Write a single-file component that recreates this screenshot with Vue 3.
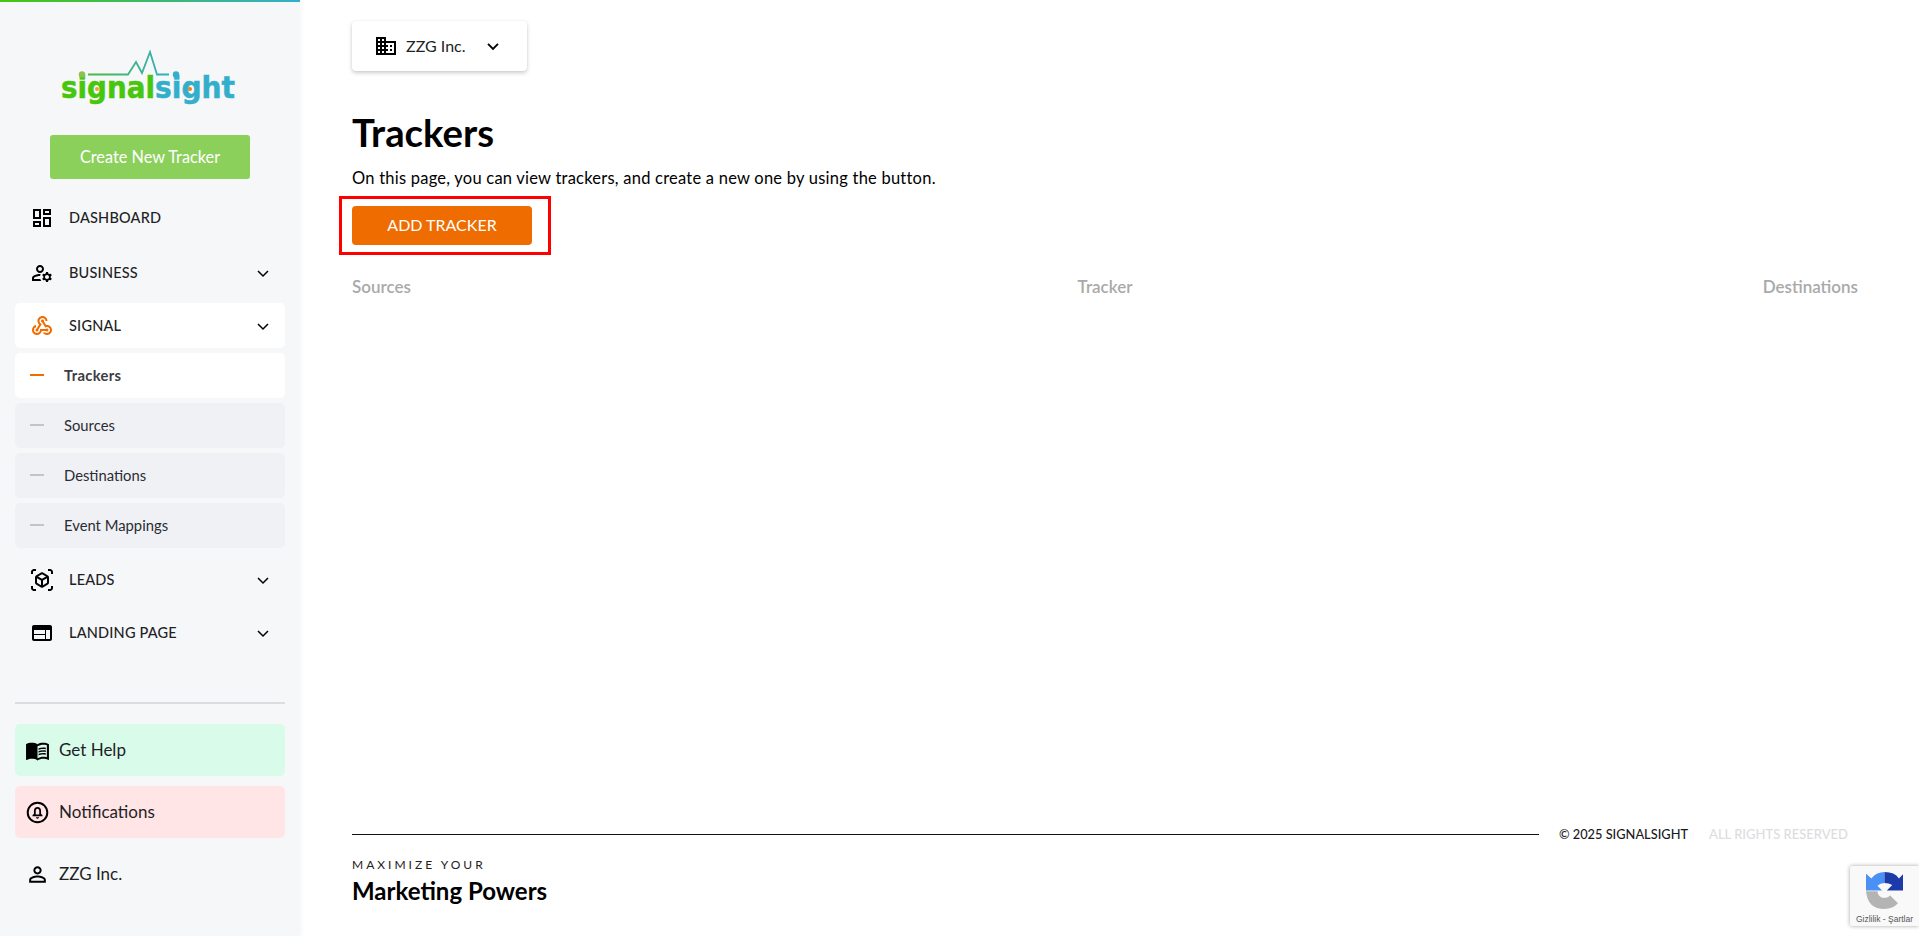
<script setup>
const chevron = 'M6 9.5l6 6 6-6'
const topItems = [
  { label: 'DASHBOARD', d: 'M19 5v2h-4V5h4M9 5v6H5V5h4m10 8v6h-4v-6h4M9 17v2H5v-2h4M21 3h-8v6h8V3zM11 3H3v10h8V3zm10 8h-8v10h8V11zm-10 4H3v6h8v-6z', arrow: false },
  { label: 'BUSINESS', d: 'M4 18v-.65c0-.34.16-.66.41-.81C6.1 15.53 8.03 15 10 15c.03 0 .05 0 .08.01.1-.7.3-1.37.59-1.98-.22-.02-.44-.03-.67-.03-2.42 0-4.68.67-6.61 1.82-.88.52-1.39 1.5-1.39 2.53V20h9.26c-.42-.6-.75-1.28-.97-2H4zM10 12c2.21 0 4-1.79 4-4s-1.79-4-4-4-4 1.79-4 4 1.79 4 4 4zm0-6c1.1 0 2 .9 2 2s-.9 2-2 2-2-.9-2-2 .9-2 2-2zM20.75 16c0-.22-.03-.42-.06-.63l1.14-1.01-1-1.73-1.45.49c-.32-.27-.68-.48-1.08-.63L18 11h-2l-.3 1.49c-.4.15-.76.36-1.08.63l-1.45-.49-1 1.73 1.14 1.01c-.03.21-.06.41-.06.63s.03.42.06.63l-1.14 1.01 1 1.73 1.45-.49c.32.27.68.48 1.08.63L16 21h2l.3-1.49c.4-.15.76-.36 1.08-.63l1.45.49 1-1.73-1.14-1.01c.03-.21.06-.41.06-.63zM17 18c-1.1 0-2-.9-2-2s.9-2 2-2 2 .9 2 2-.9 2-2 2z', arrow: true }
]
const webhook = 'M10 15h5.88c.27-.31.67-.5 1.12-.5.83 0 1.5.67 1.5 1.5s-.67 1.5-1.5 1.5c-.44 0-.84-.19-1.12-.5H11.9c-.46 2.28-2.48 4-4.9 4-2.76 0-5-2.24-5-5 0-2.42 1.72-4.44 4-4.9v2.07c-1.16.41-2 1.53-2 2.83 0 1.65 1.35 3 3 3s3-1.35 3-3v-1zm2.5-11c1.65 0 3 1.35 3 3h2c0-2.76-2.24-5-5-5s-5 2.24-5 5c0 1.43.6 2.71 1.55 3.62l-2.35 3.9c-.68.14-1.2.75-1.2 1.48 0 .83.67 1.5 1.5 1.5s1.5-.67 1.5-1.5c0-.16-.02-.31-.07-.45l3.38-5.63C10.49 9.61 9.5 8.42 9.5 7c0-1.65 1.35-3 3-3zm4.5 9c-.64 0-1.23.2-1.72.54l-3.05-5.07C11.53 8.35 11 7.74 11 7c0-.83.67-1.5 1.5-1.5S14 6.17 14 7c0 .15-.02.29-.06.43l2.19 3.65c.28-.05.57-.08.87-.08 2.76 0 5 2.24 5 5s-2.24 5-5 5c-1.85 0-3.47-1.01-4.33-2.5h2.67c.48.32 1.05.5 1.66.5 1.65 0 3-1.35 3-3s-1.35-3-3-3z'
const subItems = [
  { label: 'Trackers', active: true },
  { label: 'Sources', active: false },
  { label: 'Destinations', active: false },
  { label: 'Event Mappings', active: false }
]
const lowerItems = [
  { label: 'LEADS', d: 'M3 4c0-.55.45-1 1-1h2V1H4C2.34 1 1 2.34 1 4v2h2V4zm0 16v-2H1v2c0 1.66 1.34 3 3 3h2v-2H4c-.55 0-1-.45-1-1zM20 1h-2v2h2c.55 0 1 .45 1 1v2h2V4c0-1.66-1.34-3-3-3zm1 19c0 .55-.45 1-1 1h-2v2h2c1.66 0 3-1.34 3-3v-2h-2v2zM19 14.87V9.13c0-.72-.38-1.38-1-1.73l-5-2.88c-.31-.18-.65-.27-1-.27s-.69.09-1 .27L6 7.39c-.62.36-1 1.02-1 1.74v5.74c0 .72.38 1.38 1 1.73l5 2.88c.31.18.65.27 1 .27s.69-.09 1-.27l5-2.88c.62-.35 1-1.01 1-1.73zm-8 2.3l-4-2.3v-4.63l4 2.33v4.6zm1-6.33L8.01 8.53 12 6.23l3.99 2.3L12 10.84zm5 4.03l-4 2.3v-4.6l4-2.33v4.63z' },
  { label: 'LANDING PAGE', d: 'M20 4H4c-1.1 0-1.99.9-1.99 2L2 18c0 1.1.9 2 2 2h16c1.1 0 2-.9 2-2V6c0-1.1-.9-2-2-2zm-5 14H4v-4h11v4zm0-5H4V9h11v4zm5 5h-4V9h4v9z' }
]
const columns = ['Sources', 'Tracker', 'Destinations']
const bookPaths = [
  'M21 5c-1.11-.35-2.33-.5-3.5-.5-1.95 0-4.05.4-5.5 1.5-1.45-1.1-3.55-1.5-5.5-1.5S2.45 4.9 1 6v14.65c0 .25.25.5.5.5.1 0 .15-.05.25-.05C3.1 20.45 5.05 20 6.5 20c1.95 0 4.05.4 5.5 1.5 1.35-.85 3.8-1.5 5.5-1.5 1.65 0 3.35.3 4.75 1.05.1.05.15.05.25.05.25 0 .5-.25.5-.5V6c-.6-.45-1.25-.75-2-1zm0 13.5c-1.1-.35-2.3-.5-3.5-.5-1.7 0-4.15.65-5.5 1.5V8c1.35-.85 3.8-1.5 5.5-1.5 1.2 0 2.4.15 3.5.5v11.5z',
  'M17.5 10.5c.88 0 1.73.09 2.5.26V9.24c-.79-.15-1.64-.24-2.5-.24-1.7 0-3.24.29-4.5.83v1.66c1.13-.64 2.7-.99 4.5-.99zM13 12.49v1.66c1.13-.64 2.7-.99 4.5-.99.88 0 1.73.09 2.5.26V11.9c-.79-.15-1.64-.24-2.5-.24-1.7 0-3.24.3-4.5.83zM17.5 14.33c-1.7 0-3.24.29-4.5.83v1.66c1.13-.64 2.7-.99 4.5-.99.88 0 1.73.09 2.5.26v-1.52c-.79-.16-1.64-.24-2.5-.24z'
]
const person = 'M12 5.9c1.16 0 2.1.94 2.1 2.1s-.94 2.1-2.1 2.1S9.9 9.16 9.9 8s.94-2.1 2.1-2.1m0 9c2.97 0 6.1 1.46 6.1 2.1v1.1H5.9V17c0-.64 3.13-2.1 6.1-2.1M12 4C9.79 4 8 5.79 8 8s1.79 4 4 4 4-1.79 4-4-1.79-4-4-4zm0 9c-2.67 0-8 1.34-8 4v3h16v-3c0-2.66-5.33-4-8-4z'
const domain = 'M12 7V3H2v18h20V7H12zM6 19H4v-2h2v2zm0-4H4v-2h2v2zm0-4H4V9h2v2zm0-4H4V5h2v2zm4 12H8v-2h2v2zm0-4H8v-2h2v2zm0-4H8V9h2v2zm0-4H8V5h2v2zm10 12h-8v-2h2v-2h-2v-2h2v-2h-2V9h8v10zm-2-8h-2v2h2v-2zm0 4h-2v2h2v-2z'
</script>

<template>
  <div class="page">
    <aside class="sidebar">
      <div class="logo-wrap">
        <svg class="logo" width="210" height="80" viewBox="0 0 210 80">
          <defs>
            <linearGradient id="pulse" x1="0" x2="1" y1="0" y2="0">
              <stop offset="0" stop-color="#4cbb3c" />
              <stop offset="1" stop-color="#33aec4" />
            </linearGradient>
          </defs>
          <polyline points="48,34.500 88,34.500 96,22 102,33 110,12 117,34.500 129,34.500" fill="none" stroke="url(#pulse)" stroke-width="1.8" />
          <text x="21" y="58" class="logo-text" fill="#46c60c" stroke="#46c60c" textLength="94" lengthAdjust="spacingAndGlyphs">signal</text>
          <text x="115" y="58" class="logo-text" fill="#33aecb" stroke="#33aecb" textLength="80" lengthAdjust="spacingAndGlyphs">sight</text>
          <circle cx="42" cy="34.500" r="3.200" fill="#8cc152" />
          <circle cx="136" cy="34.500" r="3.200" fill="#33aecb" />
          <circle cx="57" cy="49" r="2" fill="#f79a3e" />
          <circle cx="150" cy="49" r="2" fill="#f77f0c" />
        </svg>
      </div>
      <button class="create">Create New Tracker</button>

      <nav class="menu">
        <a v-for="it in topItems" :key="it.label" class="item">
          <svg class="icon" viewBox="0 0 24 24"><path :d="it.d" /></svg>
          <span class="label">{{ it.label }}</span>
          <svg v-if="it.arrow" class="chev" viewBox="0 0 24 24"><path :d="chevron" /></svg>
        </a>
        <a class="item open">
          <svg class="icon orange" viewBox="0 0 24 24"><path :d="webhook" /></svg>
          <span class="label">SIGNAL</span>
          <svg class="chev" viewBox="0 0 24 24"><path :d="chevron" /></svg>
        </a>
        <div class="subs">
          <a v-for="s in subItems" :key="s.label" class="sub" :class="{ active: s.active }">
            <i class="dash"></i>
            <span>{{ s.label }}</span>
          </a>
        </div>
        <a v-for="it in lowerItems" :key="it.label" class="item lower">
          <svg class="icon" viewBox="0 0 24 24"><path :d="it.d" /></svg>
          <span class="label">{{ it.label }}</span>
          <svg class="chev" viewBox="0 0 24 24"><path :d="chevron" /></svg>
        </a>
      </nav>

      <div class="side-bottom">
        <hr class="rule" />
        <a class="tile help">
          <svg class="tile-icon" viewBox="0 0 24 24"><path v-for="p in bookPaths" :key="p" :d="p" /></svg>
          <span>Get Help</span>
        </a>
        <a class="tile notif">
          <svg class="tile-icon" viewBox="0 0 24 24">
            <circle cx="12" cy="12" r="9.400" fill="none" stroke="#000" stroke-width="1.900" />
            <path d="M12 6.800c-2.100 0-3.400 1.600-3.400 3.700v2.600L7.200 14.700v.8h9.600v-.8l-1.400-1.600v-2.600c0-2.100-1.300-3.700-3.400-3.700zm0 1.700c1.100 0 1.700 1 1.700 2.100v3.200H10.300V10.600c0-1.100.6-2.100 1.700-2.100zM10.500 16.500h3c0 .9-.7 1.400-1.500 1.400s-1.500-.5-1.500-1.400z" fill-rule="evenodd" />
          </svg>
          <span>Notifications</span>
        </a>
        <a class="tile plain">
          <svg class="tile-icon" viewBox="0 0 24 24"><path :d="person" /></svg>
          <span>ZZG Inc.</span>
        </a>
      </div>
    </aside>

    <main class="main">
      <div class="company">
        <svg class="company-icon" viewBox="0 0 24 24"><path :d="domain" /></svg>
        <span class="company-name">ZZG Inc.</span>
        <svg class="company-chev" viewBox="0 0 24 24"><path :d="chevron" /></svg>
      </div>

      <h1>Trackers</h1>
      <p class="intro">On this page, you can view trackers, and create a new one by using the button.</p>
      <div class="highlight">
        <button class="add">ADD TRACKER</button>
      </div>

      <div class="columns">
        <span v-for="c in columns" :key="c">{{ c }}</span>
      </div>

      <footer class="foot">
        <div class="foot-line">
          <i class="line"></i>
          <span class="copy">© 2025 SIGNALSIGHT</span>
          <span class="rights">ALL RIGHTS RESERVED</span>
        </div>
        <div class="maximize">MAXIMIZE YOUR</div>
        <div class="powers">Marketing Powers</div>
      </footer>
    </main>

    <div class="recaptcha">
      <svg class="rc-logo" viewBox="50 25 110 110">
        <path d="M105 25V58Q92 58 84 66L98 80H50V30L66 44Q82 25 105 25Z" fill="#4a90f5" />
        <path d="M105 25Q135 25 148 44L160 32V80H112L128 64Q118 58 105 58Z" fill="#1c3aa9" />
        <path d="M50 82H84Q86 102 105 102Q116 102 122 95L145 118Q130 135 105 135Q55 135 50 82Z" fill="#b4b4b4" />
      </svg>
      <div class="rc-text">Gizlilik - Şartlar</div>
    </div>
  </div>
</template>

<style scoped>
.page {
  display: flex;
  width: 1919px;
  height: 936px;
  overflow: hidden;
  background: #fff;
  font-family: Lato, "Noto Sans", sans-serif;
  color: #000;
  position: relative;
}
.sidebar {
  width: 300px;
  flex: none;
  box-sizing: border-box;
  padding: 2px 15px 0;
  position: relative;
  background: #f6f7f9;
  box-shadow: 2px 0 4px rgba(0, 0, 0, 0.03);
  display: flex;
  flex-direction: column;
}
.sidebar::before {
  content: "";
  position: absolute;
  left: 0;
  right: 0;
  top: 0;
  height: 2px;
  background: linear-gradient(90deg, #46c60c, #33aecb);
}
.logo-wrap {
  height: 118px;
  padding-top: 38px;
  margin-left: 25px;
  box-sizing: border-box;
}
.logo { display: block; }
.logo-text {
  font-family: "DejaVu Sans", sans-serif;
  font-weight: 700;
  font-size: 30px;
  stroke-width: 0.5px;
}
.create {
  width: 200px;
  height: 44px;
  margin: 15px 0 0 35px;
  padding: 0 0 2px;
  flex: none;
  border: 0;
  border-radius: 3px;
  background: #8cd05c;
  color: #fff;
  font: 400 16.300px Lato, sans-serif;
}
.menu { margin-top: 11px; display: flex; flex-direction: column; }
.item {
  height: 55px;
  display: flex;
  align-items: center;
  padding: 0 12px 0 15px;
  color: #1f1f26;
  box-sizing: border-box;
}
.item.lower { height: 53px; }
.item.open {
  height: 45px;
  margin-top: 3px;
  background: #fff;
  border-radius: 5px;
}
.icon { width: 24px; height: 24px; flex: none; margin-right: 15px; fill: #000; }
.icon.orange { fill: #ef6c00; }
.label { flex: 1; font-size: 14.500px; letter-spacing: 0.2px; font-weight: 500; }
.chev { width: 20px; height: 20px; fill: none; stroke: #000; stroke-width: 1.800; }
.subs { display: flex; flex-direction: column; gap: 5px; margin: 5px 0 5px; }
.sub {
  height: 45px;
  box-sizing: border-box;
  display: flex;
  align-items: center;
  padding: 0 0 1px 15px;
  border-radius: 5px;
  background: #eff1f5;
  font-size: 14.800px;
  color: #2b2b33;
}
.sub.active { background: #fff; font-weight: 700; color: #3c3c44; letter-spacing: 0.3px; }
.dash { width: 14px; height: 2px; background: #c4c4c8; margin-right: 20px; }
.sub.active .dash { background: #ef6c00; }
.side-bottom { margin-top: 43px; display: flex; flex-direction: column; gap: 10px; }
.rule { margin: 0 0 10px; border: 0; height: 2px; background: #dcdde0; }
.tile {
  height: 52px;
  display: flex;
  align-items: center;
  box-sizing: border-box;
  padding: 0 0 2px 10px;
  gap: 9px;
  border-radius: 5px;
  font-size: 17px;
  color: #1f1f26;
}
.help { background: #d9fbea; }
.notif { background: #ffe5e5; }
.tile-icon { width: 25px; height: 25px; margin-top: 2px; fill: #000; flex: none; }
.main {
  flex: 1;
  min-width: 0;
  box-sizing: border-box;
  padding: 21px 61px 0 52px;
  display: flex;
  flex-direction: column;
}
.company {
  width: 175px;
  height: 50px;
  box-sizing: border-box;
  padding: 0 0 1px 22px;
  display: flex;
  align-items: center;
  border-radius: 4px;
  background: #fff;
  box-shadow: 0 2px 4px rgba(0, 0, 0, 0.2), 0 0 2px rgba(0, 0, 0, 0.06);
  font-size: 16px;
  color: #222;
}
.company-icon { width: 24px; height: 24px; margin-right: 8px; flex: none; fill: #000; }
.company-name { white-space: nowrap; }
.company-chev { width: 20px; height: 20px; margin-left: 17px; fill: none; stroke: #000; stroke-width: 2.200; flex: none; }
h1 {
  margin: 39px 0 0;
  font-size: 38.300px;
  line-height: 44px;
  font-weight: 700;
}
.intro { margin: 13px 0 0; font-size: 16.500px; letter-spacing: 0.23px; line-height: 22px; white-space: nowrap; }
.highlight {
  align-self: flex-start;
  margin: 7px 0 0 -13px;
  padding: 7px 16px 7px 10px;
  border: 3px solid #f00;
  display: flex;
}
.add {
  width: 180px;
  height: 39px;
  padding: 0 0 3px;
  border: 0;
  border-radius: 4px;
  background: #ef6c00;
  color: #fff;
  font: 400 16px Lato, sans-serif;
}
.columns {
  display: grid;
  grid-template-columns: 1fr auto 1fr;
  margin-top: 21px;
  font-size: 17px;
  font-weight: 600;
  color: #a9a9a9;
}
.columns span:last-child { justify-self: end; }
.foot { margin-top: auto; padding-bottom: 29px; }
.foot-line { display: flex; align-items: center; font-size: 13px; font-weight: 500; }
.line { flex: 1; height: 1px; background: #111; margin: 1px 20px 0 0; }
.copy { color: #1a1a22; font-size: 12.800px; }
.rights { color: #dcdcdf; margin: 0 10px 0 21px; }
.maximize { margin-top: 15px; font-size: 12px; letter-spacing: 3px; line-height: 16px; color: #222; }
.powers { margin-top: 2px; font-size: 24px; line-height: 32px; font-weight: 700; }
.recaptcha {
  position: absolute;
  right: 0;
  top: 866px;
  width: 69px;
  height: 60px;
  box-sizing: border-box;
  background: #f9f9f9;
  box-shadow: 0 0 4px rgba(0, 0, 0, 0.35);
  border-radius: 2px 0 0 2px;
  display: flex;
  flex-direction: column;
  align-items: center;
  padding-top: 6px;
}
.rc-logo { width: 37px; height: 37px; flex: none; }
.rc-text { font: 8.500px "Liberation Sans", sans-serif; color: #555; white-space: nowrap; margin-top: 5px; }
</style>
